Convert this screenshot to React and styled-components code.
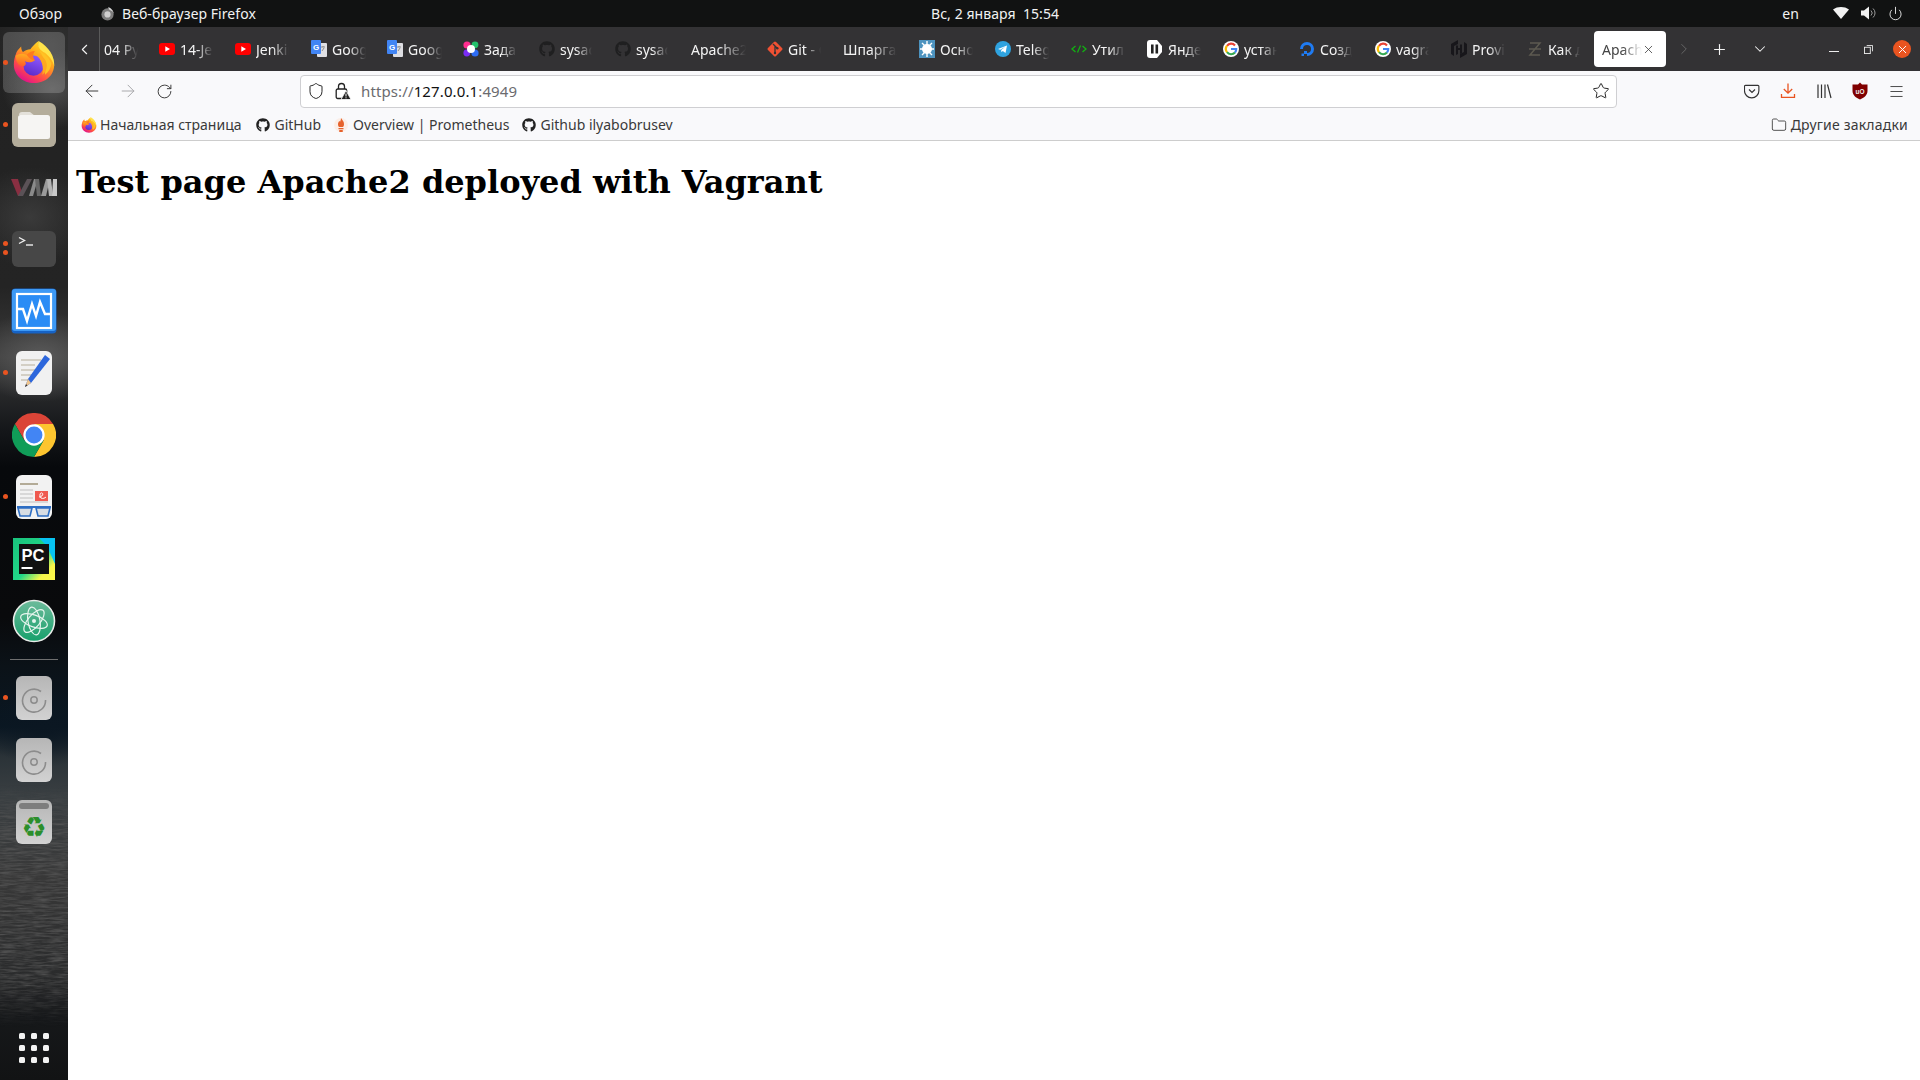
import React from 'react';
import styled, { createGlobalStyle } from 'styled-components';
import { ArrowLeft, ArrowRight, RotateCw, Star, ChevronLeft, ChevronRight, ChevronDown, Plus, X, Folder, Menu, Shield, Power } from 'lucide-react';
import { FaGithub } from 'react-icons/fa';

const UI = '"Noto Sans", "Open Sans", sans-serif';

const Global = createGlobalStyle`
  html, body { margin: 0; padding: 0; background: #fff; overflow: hidden; }
  * { box-sizing: border-box; }
`;

const Screen = styled.div`
  width: 1920px; height: 1080px; display: grid;
  grid-template-columns: 68px 1fr; grid-template-rows: 27px 1fr;
  font-family: ${UI}; overflow: hidden;
`;

/* ---- top bar ---- */
const TopBar = styled.header`
  grid-column: 1 / 3; display: flex; align-items: center; background: #111212; color: #f2f2f2;
  font-size: 14px; letter-spacing: .06px; padding-left: 19px; padding-bottom: 1px;
`;
const Overview = styled.span` width: 81px; `;
const AppName = styled.div` display: flex; align-items: center; gap: 7px; width: 831px; `;
const Clock = styled.span` white-space: pre; `;
const Tray = styled.div` margin-left: auto; display: flex; align-items: center; padding-right: 17px; `;
const Lang = styled.span` margin-right: 34px; `;
const TrayIcon = styled.span` display: flex; margin-right: ${p => p.$gap || 0}px; `;

/* ---- dock ---- */
const Dock = styled.aside`
  position: relative; display: flex; flex-direction: column; padding: 5px 0 17px; overflow: hidden;
  background:
    radial-gradient(ellipse 50px 40px at 52px 62px, #4d4d4d, transparent),
    radial-gradient(ellipse 60px 60px at 50px 20px, #333, transparent),
    radial-gradient(ellipse 60px 50px at 30px 190px, #3a3a3a, transparent),
    radial-gradient(ellipse 70px 45px at 40px 330px, #5a5a5a, transparent),
    radial-gradient(ellipse 60px 40px at 45px 700px, #0b1722, transparent),
    linear-gradient(180deg, #222 0, #242424 260px, #3a3a3a 330px, #16181b 400px, #07090c 440px, #090a0c 590px, #0b1218 640px, #0a1722 700px, #2b3338 730px, #3a3f42 770px, #383838 850px, #2a2b2c 950px, #16181a 990px, #121314 1053px);
`;
const Wallpaper = styled.svg` position: absolute; inset: 0; width: 68px; height: 1053px; `;
const Slot = styled.div`
  position: relative; height: 62px; flex: none; display: flex; align-items: center; justify-content: center;
`;
const Focus = styled.span`
  position: absolute; left: 3px; right: 3px; top: 0; bottom: 1px; border-radius: 6px; background: rgba(255,255,255,.18);
`;
const RunDot = styled.span`
  position: absolute; left: 3px; top: ${p => p.$top}px; width: 5px; height: 5px; border-radius: 50%; background: #e95420;
`;
const Divider = styled.div`
  position: relative; flex: none; height: 15px; display: flex; align-items: center; justify-content: center;
  &::after { content: ''; width: 48px; height: 1px; background: #6f6f6f; margin-bottom: 1px; }
`;
const Tile = styled.div`
  position: relative; width: ${p => p.$w || 44}px; height: ${p => p.$h || 44}px; border-radius: 6px; display: flex; align-items: center; justify-content: center;
  background: ${p => p.$bg || 'linear-gradient(180deg,#b6b6b6,#d2d2d2)'};
`;
const FoxHolder = styled.span` display: flex; margin-top: -2px; position: relative; `;
const TerminalGlyph = styled.svg` position: absolute; left: 0; top: 0; `;
const DiscGlyph = styled.svg` margin-top: 4px; `;
const RecycleMark = styled.span`
  position: absolute; left: 0; right: 0; top: 14px; text-align: center; font: 28px/28px "DejaVu Sans", sans-serif; color: #2b8f2b;
`;
const TrashLid = styled.span`
  position: absolute; left: 3px; right: 3px; top: 3px; height: 6px; border-radius: 3px; background: #7d7d7d;
`;
const AppsButton = styled.div`
  position: relative; margin: auto auto 0; display: grid; grid-template-columns: repeat(3, 6px); gap: 6px;
`;
const AppsDot = styled.span` width: 6px; height: 6px; border-radius: 1.5px; background: #f2f2f2; `;

/* ---- browser ---- */
const Browser = styled.main` display: flex; flex-direction: column; min-width: 0; background: #fff; `;
const TabBar = styled.div` height: 44px; flex: none; display: flex; align-items: center; background: #333234; color: #f4f4f4; font-size: 14px; `;
const ScrollBack = styled.div` width: 32px; height: 44px; flex: none; display: flex; align-items: center; padding-left: 8px; border-right: 1px solid #5a5a5a; `;
const Tabs = styled.div` display: flex; flex: none; width: 1494px; overflow: hidden; `;
const Tab = styled.div`
  flex: none; width: ${p => p.$first ? 51 : 76}px; padding-left: ${p => p.$first ? 4 : 8}px; display: flex; align-items: center; gap: 5px; height: 36px;
`;
const Fade = styled.span`
  display: block; overflow: hidden; white-space: nowrap; width: ${p => p.$w}px; flex: none;
  -webkit-mask-image: linear-gradient(to right, #000 50%, transparent 100%);
  mask-image: linear-gradient(to right, #000 50%, transparent 100%);
`;
const ActiveTab = styled.div`
  flex: none; width: 72px; height: 36px; background: #fff; border-radius: 4px; color: #444; display: flex; align-items: center; padding-left: 8px;
`;
const TabEnd = styled.div` display: flex; align-items: center; flex: none; `;
const BarButton = styled.span` display: flex; justify-content: center; align-items: center; flex: none; width: ${p => p.$w}px; color: ${p => p.$c || 'inherit'}; `;
const MinimizeMark = styled.span` display: block; width: 10px; height: 1.5px; background: #eee; margin-top: 5px; `;
const CloseDot = styled.span` display: flex; align-items: center; justify-content: center; width: 18px; height: 18px; border-radius: 50%; background: #e95420; color: #fff; `;

const NavBar = styled.div` height: 37px; flex: none; display: flex; align-items: center; padding-top: 3px; background: #f9f9fb; color: #333; `;
const NavButton = styled.span` flex: none; display: flex; align-items: center; justify-content: center; width: ${p => p.$w}px; color: ${p => p.$c || '#3d3d3d'}; `;
const NavSpacer = styled.span` flex: none; width: ${p => p.$w}px; `;
const UrlBox = styled.div`
  flex: none; width: 1317px; height: 33px; background: #fff; border: 1px solid #cfcfd2; border-radius: 4px; display: flex; align-items: center;
  padding-left: 6px; font-size: 15px; letter-spacing: .12px; color: #6b6b6f;
`;
const UrlSecurity = styled.span` display: flex; align-items: center; margin-right: ${p => p.$m}px; color: #222; `;
const Host = styled.span` color: #111; `;
const UrlStar = styled.span` margin-left: auto; margin-right: 6px; display: flex; color: #222; `;

const Bookmarks = styled.div`
  height: 33px; flex: none; display: flex; align-items: center; background: #f9f9fb; border-bottom: 1px solid #cdcdcd; padding: 1px 12px 0 13px; color: #3a3a3a; font-size: 14px;
`;
const Bookmark = styled.span` display: flex; align-items: center; gap: ${p => p.$gap || 4}px; margin-right: ${p => p.$m || 0}px; white-space: nowrap; `;
const OtherBookmarks = styled(Bookmark)` margin-left: auto; letter-spacing: .2px; `;

const Page = styled.div` flex: 1; padding: 8px; font-family: "DejaVu Serif", serif; color: #000; `;
const Title = styled.h1` margin: 15px 0; font-size: 32px; font-weight: 700; line-height: 37px; `;

/* ---- drawings ---- */
const FirefoxLogo = ({ size = 44, id = 'a' }) => (
  <svg width={size} height={size} viewBox="0 0 48 48">
    <defs>
      <linearGradient id={`ffb${id}`} x1=".9" y1=".1" x2=".35" y2="1">
        <stop offset="0" stopColor="#ffe226" /><stop offset=".4" stopColor="#ff9f1c" /><stop offset=".75" stopColor="#ff4a4a" /><stop offset="1" stopColor="#e31587" />
      </linearGradient>
      <linearGradient id={`ffg${id}`} x1=".7" y1="0" x2=".3" y2="1">
        <stop offset="0" stopColor="#9059ff" /><stop offset="1" stopColor="#5a2bc9" />
      </linearGradient>
      <linearGradient id={`ffh${id}`} x1=".5" y1="0" x2=".3" y2="1">
        <stop offset="0" stopColor="#ffb01f" /><stop offset="1" stopColor="#ff5a2a" />
      </linearGradient>
    </defs>
    <path d="M29 1c-1 5 1 8 5 11 1-1 1-4 1-5 5 4 11 11 11 20 0 12-10 20-22 20S2 38 2 27c0-5 1-8 2-11 1-4 3-6 6-9 0 3 1 5 2 6 3-2 5-3 8-3 2-3 5-6 9-9z" fill={`url(#ffb${id})`} />
    <path d="M29 1c-2 7 2 10 7 13 5 4 9 9 10 15 1-11-6-22-17-28z" fill="#ffe34a" />
    <path d="M30 12c6 3 11 8 13 14-1 5-3 9-7 12 1-9-1-20-6-26z" fill="#ffc225" />
    <circle cx="23.500" cy="28" r="11" fill={`url(#ffg${id})`} />
    <path d="M24 15c8 0 14 6 14 13 0 4-2 8-5 10 2-8 0-18-9-23z" fill="#ffa81f" />
    <path d="M4 17c3-2 8-3 11-1 4 1 6 4 10 6-4 3-8 3-11 1 2 3 1 5-2 6C7 29 4 23 4 17z" fill={`url(#ffh${id})`} />
    <path d="M16 16c3-3 6-4 9-4-2 3-3 6 0 10-4 0-7-3-9-6z" fill="#ff7a1f" />
  </svg>
);

const ChromeLogo = () => (
  <svg width="44" height="44" viewBox="0 0 48 48">
    <path d="M3.2 12A24 24 0 0 1 44.8 12H24L13.6 30Z" fill="#db4437" />
    <path d="M44.8 12A24 24 0 0 1 24 48L34.4 30 24 12Z" fill="#fdc52f" />
    <path d="M24 48A24 24 0 0 1 3.2 12L13.6 30H34.4Z" fill="#109d58" />
    <circle cx="24" cy="24" r="11.6" fill="#fff" />
    <circle cx="24" cy="24" r="9.2" fill="#4285f4" />
  </svg>
);

const FilesIcon = () => (
  <Tile $bg="#b4ad9b" $w={44}>
    <svg width="34" height="30" viewBox="0 0 34 30">
      <path d="M2 5a3 3 0 0 1 3-3h8l5 4H5z" fill="#e4e1da" />
      <rect x="1" y="5" width="32" height="24" rx="2.5" fill="#f6f5f3" />
    </svg>
  </Tile>
);

const VmLogo = () => (
  <svg width="48" height="19" viewBox="0 0 48 19">
    <polygon points="1,1 8,1 13,18 8,18" fill="#8a2f42" />
    <polygon points="8,18 13,18 22,1 17,1" fill="#5b5257" />
    <polygon points="19,18 24,1 28,1 23,18" fill="#8a8a8a" />
    <polygon points="25,1 29,1 31,18 27,18" fill="#666" />
    <polygon points="31,18 36,1 40,1 36,18" fill="#9a9a9a" />
    <polygon points="37,1 41,1 43,18 39,18" fill="#b4b4b4" />
    <polygon points="43,1 47,1 47,18 42,18" fill="#c8c8c8" />
  </svg>
);

const TerminalIcon = () => (
  <Tile $bg="#474747" $w={44} $h={36}>
    <TerminalGlyph width="44" height="36" viewBox="0 0 44 36">
      <path d="M7 6.5 12.5 9.5 7 12.5" fill="none" stroke="#f0f0f0" strokeWidth="1.4" />
      <path d="M14 14h7" stroke="#f0f0f0" strokeWidth="1.4" />
    </TerminalGlyph>
  </Tile>
);

const MonitorIcon = () => (
  <svg width="46" height="46" viewBox="0 0 46 46">
    <rect x=".5" y=".5" width="45" height="45" rx="4" fill="#1662c4" />
    <rect x="1" y="1" width="44" height="42" rx="3" fill="#3d99f5" />
    <rect x="6" y="6" width="34" height="34" fill="#2a8cf5" stroke="#fff" strokeWidth="2.2" />
    <path d="M6 21H12L16 33 21 16 25 28 29 14 34 26H40" fill="none" stroke="#fff" strokeWidth="2.4" />
  </svg>
);

const EditorIcon = () => (
  <Tile $bg="#f1f1f1" $w={36}>
    <svg width="36" height="44" viewBox="0 0 36 44">
      <path d="M5 9h20M5 14h14M5 19h20M5 24h14M5 29h12" stroke="#c9c4b7" strokeWidth="1.6" />
      <path d="M9 36l3-8L29 4l5 4L15 32z" fill="#2d67dc" />
      <path d="M9 36l3-8 3 4z" fill="#efc48b" />
      <path d="M9 36l1-3 1.5 1.5z" fill="#333" />
    </svg>
  </Tile>
);

const ReaderIcon = () => (
  <Tile $bg="#f2f2f2" $w={36}>
    <svg width="36" height="44" viewBox="0 0 36 44">
      <path d="M4 9h18" stroke="#b3ab97" strokeWidth="2" />
      <path d="M4 15h13M4 19h13M4 23h13M4 27h28" stroke="#cfcfcf" strokeWidth="1.5" />
      <rect x="19" y="16" width="13" height="10" fill="#ef5a50" />
      <path d="M23 22c3 0 5-3 3-4s-3 3-1 5c2 1 4 0 5-1" fill="none" stroke="#fff" strokeWidth="1" />
      <path d="M1 32h34" stroke="#2f6fc4" strokeWidth="2" />
      <path d="M2 33l2 8h10l2-8zM20 33l2 8h10l2-8z" fill="#d8dde3" stroke="#2f6fc4" strokeWidth="1.6" />
    </svg>
  </Tile>
);

const PyCharmIcon = () => (
  <svg width="42" height="42" viewBox="0 0 42 42">
    <defs>
      <linearGradient id="pc" x1="0" y1="0" x2="1" y2="1">
        <stop offset="0" stopColor="#19c37d" /><stop offset=".55" stopColor="#21d789" /><stop offset=".8" stopColor="#f7f54a" /><stop offset="1" stopColor="#fcf84a" />
      </linearGradient>
    </defs>
    <rect width="42" height="42" fill="url(#pc)" />
    <polygon points="26,0 42,0 42,26 34,8" fill="#07c3f2" />
    <rect x="6" y="6" width="30" height="30" fill="#111" />
    <text x="8.5" y="23" fontFamily="Liberation Sans" fontWeight="700" fontSize="16.5" fill="#fff">PC</text>
    <rect x="8.5" y="29" width="11" height="2" fill="#fff" />
  </svg>
);

const AtomIcon = () => (
  <svg width="44" height="44" viewBox="0 0 44 44">
    <defs>
      <linearGradient id="atm" x1="0" y1="0" x2="0" y2="1"><stop offset="0" stopColor="#6dbb9b" /><stop offset="1" stopColor="#16a06b" /></linearGradient>
    </defs>
    <circle cx="22" cy="22" r="20.5" fill="url(#atm)" stroke="#e8ece9" strokeWidth="1.6" />
    <g fill="none" stroke="#e6f5ee" strokeWidth="1.2">
      <ellipse cx="22" cy="22" rx="14" ry="6" transform="rotate(20 22 22)" />
      <ellipse cx="22" cy="22" rx="14" ry="6" transform="rotate(-50 22 22)" />
      <ellipse cx="22" cy="22" rx="14" ry="6" transform="rotate(80 22 22)" />
    </g>
    <circle cx="22" cy="22" r="2" fill="#e6f5ee" />
  </svg>
);

const DiscIcon = () => (
  <Tile $w={36}>
    <DiscGlyph width="26" height="26" viewBox="0 0 26 26" fill="none" stroke="#8c8c8c">
      <path d="M20 4.5A11.5 11.5 0 1 0 24.5 13" strokeWidth="1.6" />
      <circle cx="13" cy="13" r="3.2" strokeWidth="1.5" />
    </DiscGlyph>
  </Tile>
);

const TrashIcon = () => (
  <Tile $w={36}>
    <TrashLid />
    <RecycleMark>♻</RecycleMark>
  </Tile>
);

const YouTube = () => (
  <svg width="16" height="16" viewBox="0 0 16 16">
    <rect x="0" y="2" width="16" height="12" rx="3" fill="#f00" />
    <path d="M6.3 5.2 11 8l-4.700 2.800z" fill="#fff" />
  </svg>
);
const Translate = () => (
  <svg width="16" height="18" viewBox="0 0 16 18">
    <rect x="6" y="3" width="10" height="14" rx="1" fill="#dfdfe3" />
    <rect x="0" y="0" width="10" height="14" rx="1" fill="#4285f4" />
    <text x="2" y="10" fontSize="8" fontFamily="Liberation Sans" fontWeight="700" fill="#fff">G</text>
    <path d="M10 7h4M12 6v1M11 11l2-3" stroke="#777" strokeWidth=".8" />
  </svg>
);
const Blobs = () => (
  <svg width="16" height="16" viewBox="0 0 16 16">
    <circle cx="4" cy="4" r="3.600" fill="#ff2d8f" />
    <circle cx="12" cy="3.800" r="3.400" fill="#23c16b" />
    <circle cx="3.800" cy="12" r="3.400" fill="#7a2cf5" />
    <circle cx="12" cy="12" r="3.600" fill="#2d6cf5" />
    <circle cx="8" cy="8" r="4" fill="#fff" />
  </svg>
);
const DarkHub = () => <FaGithub size={16} color="#1f1f20" />;
const GitMark = () => (
  <svg width="16" height="18" viewBox="0 0 16 18">
    <rect x="2.300" y="3.300" width="11.400" height="11.400" rx="1.500" transform="rotate(45 8 9)" fill="#f05133" />
    <path d="M6 4l4 4M8 6v7" stroke="#333234" strokeWidth="1.300" />
    <circle cx="8" cy="13" r="1.200" fill="#333234" />
    <circle cx="10.300" cy="8.300" r="1.200" fill="#333234" />
  </svg>
);
const Splat = () => (
  <svg width="16" height="18" viewBox="0 0 16 18">
    <rect width="16" height="18" fill="#4d93bf" />
    <g fill="#fff"><circle cx="8" cy="9" r="5" /><path d="M3 3l3 3M13 3l-3 3M3 15l3-3M13 15l-3-3M8 1v4M8 13v4M1 9h4M11 9h4" stroke="#fff" strokeWidth="1.400" /></g>
  </svg>
);
const Telegram = () => (
  <svg width="16" height="16" viewBox="0 0 16 16">
    <circle cx="8" cy="8" r="8" fill="#2fa3e0" />
    <path d="M3 8l9-3.500-1.500 7.500-2.700-2-1.400 1.300-.2-2.300 4-3.300-5 3z" fill="#fff" />
  </svg>
);
const CodeMark = () => (
  <svg width="16" height="16" viewBox="0 0 16 16" fill="none" stroke="#12b012" strokeWidth="1.300">
    <path d="M4.500 5 1 8l3.500 3M11.500 5 15 8l-3.500 3M9.500 4.500l-3 7" />
  </svg>
);
const Yandex = () => (
  <svg width="16" height="18" viewBox="0 0 16 18">
    <path d="M3 0h7l5 6v6l-5 6H3a3 3 0 0 1-3-3V3a3 3 0 0 1 3-3z" fill="#fff" />
    <rect x="4" y="4.500" width="2.600" height="9" fill="#222" /><rect x="8.500" y="4.500" width="2.600" height="9" fill="#222" />
  </svg>
);
const GoogleG = () => (
  <svg width="16" height="16" viewBox="0 0 16 16">
    <circle cx="8" cy="8" r="8" fill="#fff" />
    <g fill="none" strokeWidth="2.200">
      <path d="M12 4.400A5.200 5.200 0 0 0 4 4.800" stroke="#ea4335" />
      <path d="M4 4.800a5.200 5.200 0 0 0 0 6.400" stroke="#fbbc05" />
      <path d="M4 11.200a5.200 5.200 0 0 0 8 .3" stroke="#34a853" />
      <path d="M12 11.500A5.200 5.200 0 0 0 13.200 8H8" stroke="#4285f4" />
    </g>
  </svg>
);
const Ocean = () => (
  <svg width="16" height="16" viewBox="0 0 16 16" fill="none">
    <path d="M8 13.500A5.500 5.500 0 1 0 2.500 8" stroke="#1f7bf2" strokeWidth="3" />
    <rect x="5" y="10" width="3" height="3" fill="#1f7bf2" /><rect x="2.500" y="12.500" width="2.500" height="2.500" fill="#1f7bf2" />
  </svg>
);
const Hashi = () => (
  <svg width="16" height="18" viewBox="0 0 16 18" fill="#17161a">
    <path d="M7 0 0 4v10l3 2V6l4-2zM9 18l7-4V4l-3-2v10l-4 2z" />
    <path d="M5 5.500h2V8h2V4.500h2V13l-2 1V10H7v4l-2 1z" />
  </svg>
);
const ZMark = () => (
  <svg width="16" height="16" viewBox="0 0 16 16" fill="none" stroke="#5d5a50" strokeWidth="1.500">
    <path d="M3 2h10L3 14h10M2 8h12" />
  </svg>
);
const Prometheus = () => (
  <svg width="14" height="18" viewBox="0 0 14 18">
    <circle cx="7" cy="9" r="7" fill="#fbeee7" />
    <path d="M7 2c1 2 3 3 3 6 0 1.500-.5 2.500-1 3H5c-.5-.5-1-1.500-1-3 0-1.500 1-2 1-3 1 0 1 1 1 1 .5-1.500 1-2 1-4z" fill="#e6622c" />
    <rect x="4.500" y="12" width="5" height="1.300" fill="#e6622c" /><rect x="5" y="14" width="4" height="2" rx="1" fill="#e6622c" />
  </svg>
);

const LockWarn = () => (
  <svg width="16" height="18" viewBox="0 0 16 18" fill="none">
    <rect x="1.200" y="7" width="10.500" height="9.500" rx="1.500" stroke="#222" strokeWidth="1.300" />
    <path d="M3.500 7V4.500a3 3 0 0 1 6 0V7" stroke="#222" strokeWidth="1.300" />
    <path d="M11 8.500 16 17.500H6z" fill="#222" stroke="#fff" strokeWidth=".8" />
    <path d="M11 11.500v3M11 15.300v1" stroke="#fff" strokeWidth="1" />
  </svg>
);
const PocketIcon = () => (
  <svg width="16" height="16" viewBox="0 0 16 16" fill="none" stroke="#333" strokeWidth="1.200">
    <path d="M1.500 2.500h13a1 1 0 0 1 1 1V8a7.500 7.500 0 0 1-15 0V3.500a1 1 0 0 1 1-1z" transform="scale(.96)" />
    <path d="M5 6.500l3 3 3-3" />
  </svg>
);
const DownloadIcon = () => (
  <svg width="16" height="16" viewBox="0 0 16 16" fill="none" stroke="#e95420" strokeWidth="1.300">
    <path d="M8 .5V10M3.800 6 8 10.200 12.200 6M1.500 11v3.300h13V11" />
  </svg>
);
const LibraryIcon = () => (
  <svg width="16" height="16" viewBox="0 0 16 16" fill="none" stroke="#333" strokeWidth="1.200">
    <path d="M2 1.500V15M5.500 1.500V15M9 1.500V15M11.500 1.500 15 15" />
  </svg>
);
const UBlock = () => (
  <svg width="16" height="18" viewBox="0 0 16 18">
    <path d="M8 .5 10 2.500h5.500V9c0 4-3.500 7-7.500 8.500C4 16 .5 13 .5 9V2.500H6z" fill="#800000" />
    <text x="8" y="11.500" textAnchor="middle" fontSize="6.500" fontFamily="Liberation Sans" fontWeight="700" fill="#eee">uO</text>
  </svg>
);
const Wifi = () => (
  <svg width="16" height="12" viewBox="0 0 16 12"><path d="M0 2.500C4.500-.8 11.500-.8 16 2.500L8 12z" fill="#f2f2f2" /></svg>
);
const Speaker = () => (
  <svg width="15" height="14" viewBox="0 0 15 14" fill="none">
    <path d="M0 4.500h3L8 .5v13l-5-4H0z" fill="#f2f2f2" />
    <path d="M10 4.500a3.500 3.500 0 0 1 0 5M12 2.500a6 6 0 0 1 0 9" stroke="#9a9a9a" strokeWidth="1" />
  </svg>
);
const FlameDim = () => (
  <svg width="15" height="15" viewBox="0 0 16 16">
    <circle cx="8" cy="9" r="6.500" fill="#7d7d7d" />
    <circle cx="8" cy="9" r="3.300" fill="#cfcfcf" />
    <path d="M9 1c-.5 2 1 3 3 4 2 1 3 3 3 5 0-4-2-7-6-9z" fill="#d9d9d9" />
  </svg>
);
const RestoreMark = () => (
  <svg width="9" height="9" viewBox="0 0 10 10" fill="none" stroke="#eee" strokeWidth="1">
    <rect x=".5" y="2.500" width="6.500" height="7" /><path d="M3 .5h6.500V7" />
  </svg>
);

/* ---- data ---- */
const tabs = [
  { icon: null, text: '04 Py', w: 34, first: true },
  { icon: YouTube, text: '14-Jenkins', w: 33 },
  { icon: YouTube, text: 'Jenkins', w: 33 },
  { icon: Translate, text: 'Google', w: 34 },
  { icon: Translate, text: 'Google', w: 34 },
  { icon: Blobs, text: 'Задачи', w: 33 },
  { icon: DarkHub, text: 'sysadmin', w: 32 },
  { icon: DarkHub, text: 'sysadmin', w: 32 },
  { icon: null, text: 'Apache2 Debian', w: 55 },
  { icon: GitMark, text: 'Git - Git', w: 33 },
  { icon: null, text: 'Шпаргалка', w: 54 },
  { icon: Splat, text: 'Основы', w: 33 },
  { icon: Telegram, text: 'Telegram', w: 33 },
  { icon: CodeMark, text: 'Утилиты', w: 33 },
  { icon: Yandex, text: 'Яндекс', w: 33 },
  { icon: GoogleG, text: 'установить', w: 33 },
  { icon: Ocean, text: 'Создать', w: 32 },
  { icon: GoogleG, text: 'vagrant', w: 33 },
  { icon: Hashi, text: 'Provider', w: 33 },
  { icon: ZMark, text: 'Как добавить', w: 32 },
];

const dock = [
  { el: <FoxHolder><FirefoxLogo id="dock" /></FoxHolder>, focus: true, dots: [28] },
  { el: <FilesIcon />, dots: [28] },
  { el: <VmLogo /> },
  { el: <TerminalIcon />, dots: [23, 32] },
  { el: <MonitorIcon /> },
  { el: <EditorIcon />, dots: [28] },
  { el: <ChromeLogo /> },
  { el: <ReaderIcon />, dots: [28] },
  { el: <PyCharmIcon /> },
  { el: <AtomIcon /> },
];

const Wall = () => (
  <Wallpaper viewBox="0 0 68 1053">
    <defs>
      <filter id="streak" x="0" y="0" width="100%" height="100%">
        <feTurbulence type="fractalNoise" baseFrequency="0.06 0.55" numOctaves="3" seed="4" />
        <feColorMatrix values="0 0 0 0 .1  0 0 0 0 .1  0 0 0 0 .1  1.600 0 0 0 -.55" />
      </filter>
      <linearGradient id="streakMask" x1="0" y1="0" x2="0" y2="1">
        <stop offset=".72" stopColor="#000" /><stop offset=".76" stopColor="#fff" /><stop offset=".9" stopColor="#fff" /><stop offset=".95" stopColor="#000" />
      </linearGradient>
      <mask id="streakM"><rect width="68" height="1053" fill="url(#streakMask)" /></mask>
    </defs>
    <rect width="68" height="1053" filter="url(#streak)" mask="url(#streakM)" />
  </Wallpaper>
);

export default function App() {
  return (
    <Screen>
      <Global />
      <TopBar>
        <Overview>Обзор</Overview>
        <AppName><FlameDim />Веб-браузер Firefox</AppName>
        <Clock>Вс, 2 января  15:54</Clock>
        <Tray>
          <Lang>en</Lang>
          <TrayIcon $gap={12}><Wifi /></TrayIcon>
          <TrayIcon $gap={12}><Speaker /></TrayIcon>
          <TrayIcon><Power size={15} strokeWidth={1.4} /></TrayIcon>
        </Tray>
      </TopBar>

      <Dock>
        <Wall />
        {dock.map((d, i) => (
          <Slot key={i}>
            {d.focus && <Focus />}
            {d.dots && d.dots.map(t => <RunDot key={t} $top={t} />)}
            {d.el}
          </Slot>
        ))}
        <Divider />
        <Slot><RunDot $top={28} /><DiscIcon /></Slot>
        <Slot><DiscIcon /></Slot>
        <Slot><TrashIcon /></Slot>
        <AppsButton>{Array.from({ length: 9 }, (_, i) => <AppsDot key={i} />)}</AppsButton>
      </Dock>

      <Browser>
        <TabBar>
          <ScrollBack><ChevronLeft size={17} strokeWidth={1.6} /></ScrollBack>
          <Tabs>
            {tabs.map((t, i) => {
              const Icon = t.icon;
              return (
                <Tab key={i} $first={t.first}>
                  {Icon && <Icon />}
                  <Fade $w={t.w}>{t.text}</Fade>
                </Tab>
              );
            })}
          </Tabs>
          <ActiveTab>
            <Fade $w={40}>Apache2</Fade>
            <X size={13} strokeWidth={1.4} color="#333" />
          </ActiveTab>
          <TabEnd>
            <BarButton $w={36} $c="#666"><ChevronRight size={18} strokeWidth={1.3} /></BarButton>
            <BarButton $w={34}><Plus size={17} strokeWidth={1.6} /></BarButton>
            <BarButton $w={48}><ChevronDown size={18} strokeWidth={1.4} /></BarButton>
            <BarButton $w={33} />
            <BarButton $w={34}><MinimizeMark /></BarButton>
            <BarButton $w={34}><RestoreMark /></BarButton>
            <BarButton $w={34}><CloseDot><X size={13} strokeWidth={1.8} /></CloseDot></BarButton>
          </TabEnd>
        </TabBar>

        <NavBar>
          <NavButton $w={48}><ArrowLeft size={20} strokeWidth={1.2} /></NavButton>
          <NavButton $w={24} $c="#a9a9ac"><ArrowRight size={20} strokeWidth={1.2} /></NavButton>
          <NavButton $w={48}><RotateCw size={17} strokeWidth={1.4} /></NavButton>
          <NavSpacer $w={112} />
          <UrlBox>
            <UrlSecurity $m={10}><Shield size={18} strokeWidth={1.3} /></UrlSecurity>
            <UrlSecurity $m={10}><LockWarn /></UrlSecurity>
            <span>https://<Host>127.0.0.1</Host>:4949</span>
            <UrlStar><Star size={18} strokeWidth={1.3} /></UrlStar>
          </UrlBox>
          <NavSpacer $w={117} />
          <NavButton $w={36}><PocketIcon /></NavButton>
          <NavButton $w={36}><DownloadIcon /></NavButton>
          <NavButton $w={36}><LibraryIcon /></NavButton>
          <NavButton $w={36}><UBlock /></NavButton>
          <NavButton $w={36}><Menu size={17} strokeWidth={1.3} /></NavButton>
        </NavBar>

        <Bookmarks>
          <Bookmark $m={14} $gap={3}><FirefoxLogo size={16} id="bm" />Начальная страница</Bookmark>
          <Bookmark $m={13} $gap={5}><FaGithub size={14} color="#222" />GitHub</Bookmark>
          <Bookmark $m={13} $gap={5}><Prometheus />Overview | Prometheus</Bookmark>
          <Bookmark><FaGithub size={14} color="#222" />Github ilyabobrusev</Bookmark>
          <OtherBookmarks $gap={4}><Folder size={16} strokeWidth={1.3} />Другие закладки</OtherBookmarks>
        </Bookmarks>

        <Page>
          <Title>Test page Apache2 deployed with Vagrant</Title>
        </Page>
      </Browser>
    </Screen>
  );
}
